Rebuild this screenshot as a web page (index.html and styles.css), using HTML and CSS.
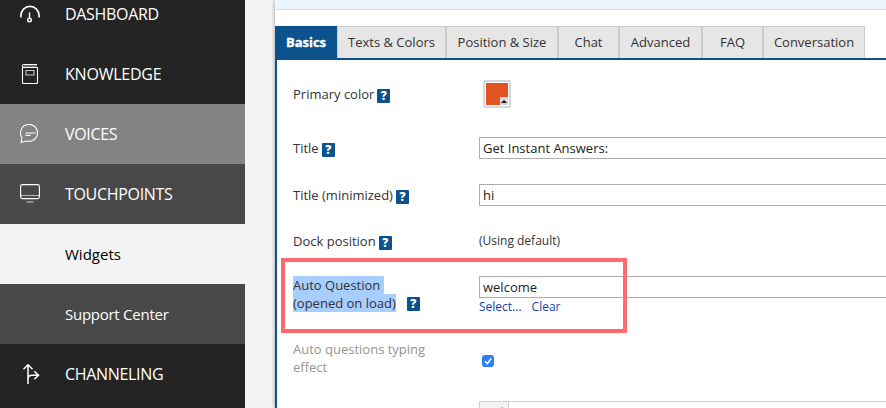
FILE: index.html
```html
<!DOCTYPE html>
<html lang="en">
<head>
<meta charset="utf-8">
<title>Widgets</title>
<link rel="stylesheet" href="styles.css">
</head>
<body>
<div class="app">
  <nav class="sidebar">
    <a class="item first"><svg class="icon" viewBox="0 0 20 20"><path d="M.9 13V11a9.1 9.1 0 0 1 18.2 0v2" transform="translate(0 1.500)" stroke-width="1.600"/><path d="M9.500 9.500v6" stroke-width="1.400"/><circle cx="9.500" cy="17" r="1.800" stroke-width="1.400"/></svg><span class="t-dash">DASHBOARD</span></a>
    <a class="item"><svg class="icon" viewBox="0 0 20 20"><path d="M17.500 3.500v15q0 1-1 1h-13q-1 0-1-1V1.800Q2.500.500 4 .500h13M2.500 2Q2.500 3.500 4 3.500h13.500"/><path d="M4 2h13" opacity=".6"/><path d="M6 6.500h8v4.500H6z" opacity=".75"/></svg><span class="t-know">KNOWLEDGE</span></a>
    <a class="item hover"><svg class="icon" viewBox="0 0 20 20"><path d="M1 18.300l1-4.600A8.500 8.500 0 1 1 6.500 17z"/><path d="M5.500 9h10M5.500 11.400h5" stroke-width="1.200"/></svg><span class="t-voice">VOICES</span></a>
    <a class="item open"><svg class="icon" viewBox="0 0 20 20"><rect x=".6" y=".6" width="18.800" height="14" rx="1.800"/><path d="M1 11.500h18" opacity=".6"/><path d="M6.500 18h7" stroke-width="1.300" opacity=".6"/></svg><span class="t-touch">TOUCHPOINTS</span></a>
    <a class="item sub current"><span class="t-wid">Widgets</span></a>
    <a class="item sub open"><span class="t-sup">Support Center</span></a>
    <a class="item"><svg class="icon" viewBox="0 0 20 20"><path d="M8 20V1.200M3.500 5.200L8 .8l4.500 4.400M8 17v-2q0-3.800 4-3.800h6M14.300 7.200l4.200 4-4.200 4" stroke-width="1.500"/></svg><span class="t-chan">CHANNELING</span></a>
  </nav>
  <main class="main">
    <div class="notice"></div>
    <div class="tabs">
      <a class="tab active w1"><span>Basics</span></a><a class="tab w2"><span>Texts &amp; Colors</span></a><a class="tab w3"><span>Position &amp; Size</span></a><a class="tab w4"><span>Chat</span></a><a class="tab w5"><span>Advanced</span></a><a class="tab w6"><span>FAQ</span></a><a class="tab w7"><span>Conversation</span></a>
    </div>
    <form class="panel">
      <div class="row r1"><div class="label"><span>Primary color</span><b class="help">?</b></div><div class="swatch"><div class="color"><i class="corner"></i></div></div></div>
      <div class="row r2"><div class="label"><span>Title</span><b class="help">?</b></div><div class="input">Get Instant Answers:</div></div>
      <div class="row r3"><div class="label"><span>Title (minimized)</span><b class="help">?</b></div><div class="input">hi</div></div>
      <div class="row r4"><div class="label"><span>Dock position</span><b class="help">?</b></div><div class="small">(Using default)</div></div>
      <div class="row r5"><div class="label multi"><div><mark>Auto Question </mark><br><mark>(opened on load)</mark></div><b class="help">?</b></div><div><div class="input">welcome</div><div class="links"><a>Select...</a><a>Clear</a></div></div><div class="callout"></div></div>
      <div class="row r6"><div class="label muted"><span>Auto questions typing<br>effect</span></div><div class="check"><svg viewBox="0 0 12 12"><path d="M3 6.300l2.200 2.400L9.200 3.400"/></svg></div></div>
      <div class="row r7"><div></div><div class="group"><div class="addon"><svg viewBox="0 0 12 12"><path d="M6 4L9.500 0V4"/></svg></div></div></div>
    </form>
  </main>
</div>
</body>
</html>
```
FILE: styles.css
```css
* { box-sizing: border-box; }
body { margin: 0; height: 408px; overflow: hidden; background: #f3f3f5; font: 13px/18px "Open Sans", sans-serif; color: #333; }
.app { display: flex; height: 408px; overflow: hidden; }
.sidebar { width: 245px; flex: none; background: #242424; margin-right: 30px; }
.item { display: flex; align-items: center; height: 60px; padding-left: 20px; gap: 25px; color: #fff; font-size: 16px; line-height: 22px; white-space: nowrap; }
.item.first { margin-top: -16px; }
.item.hover { background: #838383; }
.item.open { background: #484848; }
.item.current { background: #f3f3f3; color: #000; }
.item.sub { padding-left: 65px; font-size: 15px; }
.icon { width: 20px; height: 20px; flex: none; overflow: visible; fill: none; stroke: #fff; stroke-width: 1.1; }
.first .icon { margin-top: -3px; }
.t-dash, .t-voice, .t-touch, .t-chan { letter-spacing: -.32px; }
.t-know { letter-spacing: -.22px; }
.t-sup { letter-spacing: -.26px; }

.main { flex: 1; min-width: 0; background: #fff; box-shadow: 0 0 4px rgba(0,0,0,.4); display: flex; flex-direction: column; }
.notice { height: 10px; flex: none; background: #ebf6ff; border-bottom: 1px solid #d9dde0; }
.tabs { display: flex; flex: none; height: 50px; padding-top: 16px; border-bottom: 2px solid #0c528c; }
.tab { height: 32px; padding-bottom: 2px; display: flex; align-items: center; justify-content: center; background: #e6e6e6; border: 1px solid #ccc; border-bottom: 0; flex: none; white-space: nowrap; }
.tab.active { background: #0c528c; border-color: #0c528c; color: #fff; font-weight: 700; -webkit-text-stroke: .3px #fff; }
.w1 { width: 62px; } .w2 { width: 109px; } .w3 { width: 112px; } .w4 { width: 61px; } .w5 { width: 83px; } .w6 { width: 61px; } .w7 { width: 102px; }

.panel { flex: 1; border-left: 2px solid #0c528c; padding-left: 16px; }
.row { display: grid; grid-template-columns: 186px 1fr; align-items: center; position: relative; white-space: nowrap; }
.r1 { height: 68px; }
.r2 { height: 40px; }
.r3 { height: 54px; }
.r4 { height: 38px; }
.r5 { height: 81px; align-items: start; padding-top: 16px; }
.r6 { height: 60px; align-items: start; }
.label { display: flex; align-items: center; gap: 3px; }
.help { width: 13px; height: 14px; border-radius: 1px; background: #0c528c; color: #fff; font-size: 12px; line-height: 14px; font-weight: 800; text-align: center; position: relative; top: 2px; }
.multi { align-items: flex-end; gap: 11px; }
.multi .help { top: -1px; }
mark { background: #a8cdff; color: inherit; white-space: pre; }
.muted { color: #949494; margin-top: -1px; }
.input { height: 22px; border: 1px solid #adadad; border-right: 0; padding: 1px 3px; background: #fff; color: #222; }
.small { font-size: 12px; }
.links { display: flex; gap: 10px; font-size: 12px; color: #0c3fb0; }
.swatch { width: 28px; height: 28px; margin-left: 4px; border: 2px solid #d3d7df; border-radius: 2px; padding: 1px; background: #fff; }
.color { height: 22px; background: #e15321; display: flex; align-items: flex-end; justify-content: flex-end; }
.corner { width: 8px; height: 8px; background: #d3d7df; display: flex; align-items: center; justify-content: center; }
.corner::before { content: ""; border: 3px solid transparent; border-top: 0; border-bottom-color: #111; }
.callout { position: absolute; left: -12px; top: -2px; width: 346px; height: 75px; border: 4px solid #ff6a6c; }
.check { width: 12px; height: 12px; margin: 14px 0 0 3px; border-radius: 3px; background: #2b7ffb; }
.check svg { display: block; width: 12px; height: 12px; fill: none; stroke: #fff; stroke-width: 1.6; }
.group { height: 30px; border: 1px solid #d0d0d0; border-right: 0; }
.addon { width: 29px; height: 28px; background: #f3f3f3; border-right: 1px solid #d0d0d0; padding: 5px 0 0 13px; }
.addon svg { width: 12px; height: 12px; display: block; fill: none; stroke: #aaa; }
```
